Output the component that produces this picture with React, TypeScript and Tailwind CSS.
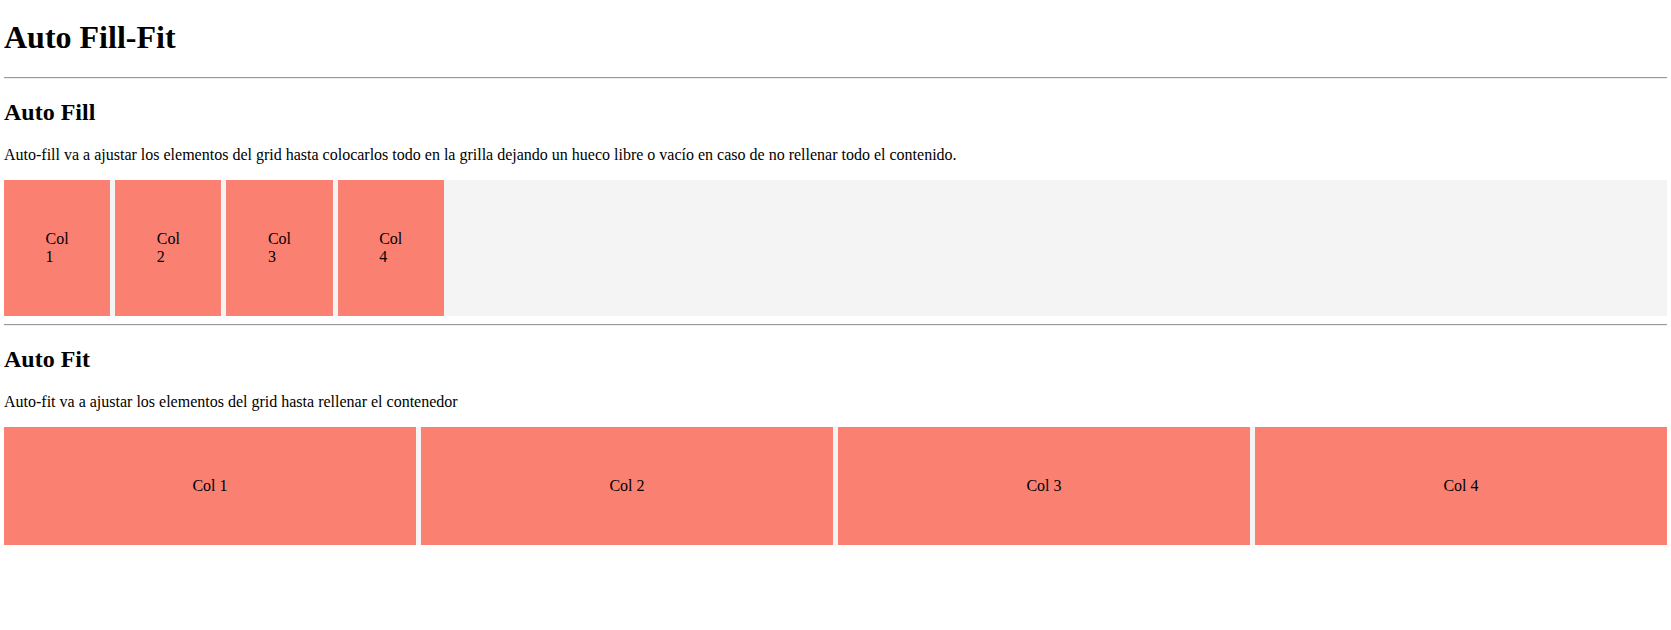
export default function App() {
  const cols = ["Col 1", "Col 2", "Col 3", "Col 4"];
  return (
    <div className="px-[4px] pt-[19px] text-black bg-white" style={{ fontFamily: '"Liberation Serif", "Times New Roman", serif' }}>
      <h1 className="text-[32px] font-bold leading-[normal] m-0 mb-[21.44px]">Auto Fill-Fit</h1>
      <hr className="border-0 border-t border-b border-t-[#9a9a9a] border-b-[#eeeeee] my-2" />
      <h2 className="text-[24px] font-bold leading-[normal] mt-[19.92px] mb-[19.92px]">Auto Fill</h2>
      <p className="text-[16px] leading-[normal] mb-4">
        Auto-fill va a ajustar los elementos del grid hasta colocarlos todo en la grilla dejando un hueco libre o vacío en caso de no rellenar todo el contenido.
      </p>
      <div className="grid grid-cols-[repeat(auto-fill,minmax(100px,1fr))] gap-[5px] bg-[#f4f4f4]">
        {cols.map((c) => (
          <div key={c} className="flex items-center justify-center p-[50px] bg-[#fa8072] text-[16px] leading-[normal]">
            {c}
          </div>
        ))}
      </div>
      <hr className="border-0 border-t border-b border-t-[#9a9a9a] border-b-[#eeeeee] my-2" />
      <h2 className="text-[24px] font-bold leading-[normal] mt-[19.92px] mb-[19.92px]">Auto Fit</h2>
      <p className="text-[16px] leading-[normal] mb-4">
        Auto-fit va a ajustar los elementos del grid hasta rellenar el contenedor
      </p>
      <div className="grid grid-cols-[repeat(auto-fit,minmax(100px,1fr))] gap-[5px] bg-[#f4f4f4]">
        {cols.map((c) => (
          <div key={c} className="flex items-center justify-center p-[50px] bg-[#fa8072] text-[16px] leading-[normal]">
            {c}
          </div>
        ))}
      </div>
    </div>
  );
}
